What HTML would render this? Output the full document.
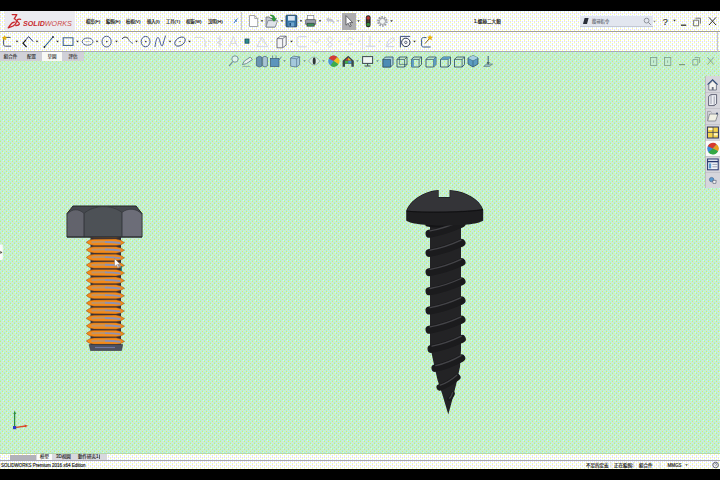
<!DOCTYPE html>
<html lang="zh-Hant">
<head>
<meta charset="utf-8">
<title>SOLIDWORKS</title>
<style>
html,body{margin:0;padding:0;background:#000;}
body{width:720px;height:480px;overflow:hidden;position:relative;font-family:"Liberation Sans","Noto Sans CJK TC",sans-serif;color:#222;}
.abs{position:absolute;}
#app{position:absolute;left:0;top:11px;width:720px;height:458px;overflow:hidden;}
#titlebar{position:absolute;left:0;top:0;width:720px;height:20px;}
#logo{position:absolute;left:4.5px;top:0;width:70px;height:20px;background:#ebebf0;}
#toolbar{position:absolute;left:0;top:21px;width:720px;height:20px;}
#tabs{position:absolute;left:0;top:40.5px;width:84px;height:9px;background:#d0d0d8;}
.tab{position:absolute;top:0;height:9px;font-size:4.5px;line-height:10px;text-align:center;color:#333;white-space:nowrap;}
.menu{position:absolute;top:6px;-webkit-text-stroke:0.18px;height:10px;font-size:4.3px;line-height:10.5px;color:#222;white-space:nowrap;}
.t{position:absolute;white-space:nowrap;color:#222;}
.s{-webkit-text-stroke:0.15px;}
.tab,.bt{-webkit-text-stroke:0.12px;}
.s{font-size:4.5px;line-height:8px;top:1.5px;}
#btabs{position:absolute;left:0;top:443px;width:720px;height:6px;}
#status{position:absolute;left:0;top:449px;width:720px;height:9px;}
#taskpane{position:absolute;left:705px;top:65px;width:15px;height:112px;background:#d6d6dc;}
svg{position:absolute;left:0;top:0;overflow:visible;}
</style>
</head>
<body>
<svg id="bg" width="720" height="480" viewBox="0 0 720 480" shape-rendering="crispEdges">
<defs>
<pattern id="dg" width="8" height="8" patternUnits="userSpaceOnUse">
<rect width="8" height="8" fill="#dbffaa"/>
<rect x="0" y="0" width="1" height="1" fill="#b6ffaa"/>
<rect x="1" y="0" width="1" height="1" fill="#b6dbff"/>
<rect x="3" y="0" width="1" height="1" fill="#b6ffff"/>
<rect x="4" y="0" width="1" height="1" fill="#b6ffaa"/>
<rect x="5" y="0" width="1" height="1" fill="#b6dbff"/>
<rect x="7" y="0" width="1" height="1" fill="#b6dbff"/>
<rect x="0" y="1" width="1" height="1" fill="#b6dbaa"/>
<rect x="2" y="1" width="1" height="1" fill="#b6dbff"/>
<rect x="4" y="1" width="1" height="1" fill="#b6dbaa"/>
<rect x="6" y="1" width="1" height="1" fill="#b6dbff"/>
<rect x="1" y="2" width="1" height="1" fill="#b6dbff"/>
<rect x="3" y="2" width="1" height="1" fill="#b6dbff"/>
<rect x="5" y="2" width="1" height="1" fill="#b6dbff"/>
<rect x="6" y="2" width="1" height="1" fill="#b6ffaa"/>
<rect x="7" y="2" width="1" height="1" fill="#b6dbff"/>
<rect x="0" y="3" width="1" height="1" fill="#b6dbff"/>
<rect x="2" y="3" width="1" height="1" fill="#b6dbaa"/>
<rect x="4" y="3" width="1" height="1" fill="#b6dbff"/>
<rect x="6" y="3" width="1" height="1" fill="#b6dbaa"/>
<rect x="0" y="4" width="1" height="1" fill="#b6ffaa"/>
<rect x="1" y="4" width="1" height="1" fill="#b6dbff"/>
<rect x="3" y="4" width="1" height="1" fill="#b6dbff"/>
<rect x="4" y="4" width="1" height="1" fill="#b6ffaa"/>
<rect x="5" y="4" width="1" height="1" fill="#b6dbff"/>
<rect x="7" y="4" width="1" height="1" fill="#b6ffff"/>
<rect x="0" y="5" width="1" height="1" fill="#b6dbaa"/>
<rect x="2" y="5" width="1" height="1" fill="#b6dbff"/>
<rect x="4" y="5" width="1" height="1" fill="#b6dbaa"/>
<rect x="6" y="5" width="1" height="1" fill="#b6dbff"/>
<rect x="1" y="6" width="1" height="1" fill="#b6dbff"/>
<rect x="2" y="6" width="1" height="1" fill="#b6ffaa"/>
<rect x="3" y="6" width="1" height="1" fill="#b6dbff"/>
<rect x="5" y="6" width="1" height="1" fill="#b6dbff"/>
<rect x="7" y="6" width="1" height="1" fill="#b6dbff"/>
<rect x="0" y="7" width="1" height="1" fill="#b6dbff"/>
<rect x="2" y="7" width="1" height="1" fill="#b6dbaa"/>
<rect x="4" y="7" width="1" height="1" fill="#b6dbff"/>
<rect x="6" y="7" width="1" height="1" fill="#b6dbaa"/>
</pattern>
<pattern id="dw" width="4" height="4" patternUnits="userSpaceOnUse"><rect width="4" height="4" fill="#ffffff"/>
<rect x="0" y="0" width="1" height="1" fill="#ffff99"/>
<rect x="0" y="1" width="1" height="1" fill="#dbdbff"/>
<rect x="2" y="1" width="1" height="1" fill="#dbdbff"/>
<rect x="2" y="2" width="1" height="1" fill="#ffff99"/>
<rect x="0" y="3" width="1" height="1" fill="#dbdbff"/>
<rect x="2" y="3" width="1" height="1" fill="#dbffff"/>
</pattern>
</defs>
<rect x="0" y="11" width="720" height="458" fill="#c5eeca"/>
<rect x="0" y="11" width="720" height="458" fill="url(#dg)"/>
<rect x="0" y="11" width="720" height="41" fill="#f6f8f3"/>
<rect x="0" y="11" width="720" height="41" fill="url(#dw)"/>
<rect x="0" y="453" width="720" height="1" fill="#b6d6ac"/>
<rect x="0" y="454" width="720" height="15" fill="#f6f8f3"/>
<rect x="0" y="454" width="720" height="15" fill="url(#dw)"/>
<rect x="0" y="460" width="720" height="1" fill="#a6a6aa"/>
<rect x="0" y="51" width="720" height="1" fill="#a8a8b8"/>
<rect x="0" y="31" width="720" height="1" fill="#9c9ca4"/>
</svg>
<div id="app">
  <div id="titlebar">
    <div id="logo"></div>
    <div class="t" id="sw" style="left:22.5px;top:8px;font-size:7.7px;line-height:9px;font-style:italic;color:#c8282c;transform-origin:0 0;transform:scaleX(0.93);"><b>SOLID</b><span style="color:#cc4848;">WORKS</span></div>
    <div class="menu" style="left:86px;">檔案(F)</div>
    <div class="menu" style="left:106px;">編輯(E)</div>
    <div class="menu" style="left:126px;">檢視(V)</div>
    <div class="menu" style="left:147px;">插入(I)</div>
    <div class="menu" style="left:166px;">工具(T)</div>
    <div class="menu" style="left:186px;">視窗(W)</div>
    <div class="menu" style="left:208px;">說明(H)</div>
    <div class="abs" style="left:241px;top:1px;width:1px;height:18px;background:#c8c8d0;"></div>
    <div class="menu" style="left:474px;font-size:4.6px;">1.螺絲二大類</div>
    <div class="abs" style="left:580px;top:4.500px;width:73px;height:10.500px;background:#e2e6ef;border-bottom:0.5px solid #c4c8d4;"></div>
    <div class="menu" style="left:592px;color:#707480;">搜尋指令</div>
    <div class="t" style="left:662.500px;top:4.500px;font-size:9.5px;line-height:12px;color:#333;-webkit-text-stroke:0.18px;">?</div>
  </div>
    <div id="toolbar"></div>
  <div class="abs" style="left:716.500px;top:21px;width:1px;height:20px;background:#c4c4cc;"></div>
  <div id="tabs">
    <div class="tab" style="left:0;width:21px;">組合件</div>
    <div class="tab" style="left:21px;width:21px;">配置</div>
    <div class="tab" style="left:42px;width:20px;background:#f8f9f6;">草圖</div>
    <div class="tab" style="left:62px;width:22px;">評估</div>
  </div>
  <div id="taskpane"></div>
  <div id="btabs">
    <div class="abs" style="left:10px;top:1px;width:26px;height:4.5px;background:#b2b2ba;"></div>
    <div class="abs" style="left:36px;top:0;width:70.500px;height:6px;background:#d8d8de;"></div>
    <div class="abs" style="left:37px;top:0;width:14.500px;height:6px;background:#fafafa;"></div>
    <div class="t bt" style="left:40px;top:-1px;font-size:4.500px;line-height:7.500px;">模型</div>
    <div class="t bt" style="left:56px;top:-1px;font-size:4.500px;line-height:7.500px;">3D視圖</div>
    <div class="t bt" style="left:78px;top:-1px;font-size:4.500px;line-height:7.500px;">動作研究1</div>
  </div>
  <div id="status">
    <div class="t s" style="left:1px;">SOLIDWORKS Premium 2016 x64 Edition</div>
    <div class="t s" style="left:586px;">不足的定義</div>
    <div class="t s" style="left:614px;">正在編輯:</div>
    <div class="t s" style="left:639px;">組合件</div>
    <div class="t s" style="left:667.500px;">MMGS</div>
  </div>
  <svg id="gfx" width="720" height="458" viewBox="0 11 720 458">
<rect x="90.500" y="236" width="30.500" height="110" fill="#342e38"/>
<path d="M86.200 234.65Q88.500 231.95,94 231.55L116 231.45Q121.500 232.15,124.600 235.05Q121.500 237.75,116 237.95L94 237.85Q88.500 237.35,86.200 234.65z" fill="#f48a18" stroke="#6a4428" stroke-width="0.4"/>
<path d="M91.500 234.55C98 234.15,102 234.15,107 234.35" stroke="#c09468" stroke-width="2" fill="none"/>
<path d="M105 234.35C112 234.35,116 234.75,120.500 235.35" stroke="#8c92b4" stroke-width="1.9" fill="none"/>
<path d="M86.200 242.25Q88.500 239.55,94 239.15L116 239.05Q121.500 239.75,124.600 242.65Q121.500 245.35,116 245.55L94 245.45Q88.500 244.95,86.200 242.25z" fill="#f48a18" stroke="#6a4428" stroke-width="0.4"/>
<path d="M91.500 242.15C98 241.75,102 241.75,107 241.95" stroke="#c09468" stroke-width="2" fill="none"/>
<path d="M105 241.95C112 241.95,116 242.35,120.500 242.95" stroke="#8c92b4" stroke-width="1.9" fill="none"/>
<path d="M86.200 249.85Q88.500 247.15,94 246.75L116 246.65Q121.500 247.35,124.600 250.25Q121.500 252.95,116 253.15L94 253.05Q88.500 252.55,86.200 249.85z" fill="#f48a18" stroke="#6a4428" stroke-width="0.4"/>
<path d="M91.500 249.75C98 249.35,102 249.35,107 249.55" stroke="#c09468" stroke-width="2" fill="none"/>
<path d="M105 249.55C112 249.55,116 249.95,120.500 250.55" stroke="#8c92b4" stroke-width="1.9" fill="none"/>
<path d="M86.200 257.45Q88.500 254.75,94 254.35L116 254.25Q121.500 254.95,124.600 257.85Q121.500 260.55,116 260.75L94 260.65Q88.500 260.15,86.200 257.45z" fill="#f48a18" stroke="#6a4428" stroke-width="0.4"/>
<path d="M91.500 257.35C98 256.95,102 256.95,107 257.15" stroke="#c09468" stroke-width="2" fill="none"/>
<path d="M105 257.15C112 257.15,116 257.55,120.500 258.15" stroke="#8c92b4" stroke-width="1.9" fill="none"/>
<path d="M86.200 265.05Q88.500 262.35,94 261.95L116 261.85Q121.500 262.55,124.600 265.45Q121.500 268.15,116 268.35L94 268.25Q88.500 267.75,86.200 265.05z" fill="#f48a18" stroke="#6a4428" stroke-width="0.4"/>
<path d="M91.500 264.95C98 264.55,102 264.55,107 264.75" stroke="#c09468" stroke-width="2" fill="none"/>
<path d="M105 264.75C112 264.75,116 265.15,120.500 265.75" stroke="#8c92b4" stroke-width="1.9" fill="none"/>
<path d="M86.200 272.65Q88.500 269.95,94 269.55L116 269.45Q121.500 270.15,124.600 273.05Q121.500 275.75,116 275.95L94 275.85Q88.500 275.35,86.200 272.65z" fill="#f48a18" stroke="#6a4428" stroke-width="0.4"/>
<path d="M91.500 272.55C98 272.15,102 272.15,107 272.35" stroke="#c09468" stroke-width="2" fill="none"/>
<path d="M105 272.35C112 272.35,116 272.75,120.500 273.35" stroke="#8c92b4" stroke-width="1.9" fill="none"/>
<path d="M86.200 280.25Q88.500 277.55,94 277.15L116 277.05Q121.500 277.75,124.600 280.65Q121.500 283.35,116 283.55L94 283.45Q88.500 282.95,86.200 280.25z" fill="#f48a18" stroke="#6a4428" stroke-width="0.4"/>
<path d="M91.500 280.15C98 279.75,102 279.75,107 279.95" stroke="#c09468" stroke-width="2" fill="none"/>
<path d="M105 279.95C112 279.95,116 280.35,120.500 280.95" stroke="#8c92b4" stroke-width="1.9" fill="none"/>
<path d="M86.200 287.85Q88.500 285.15,94 284.75L116 284.65Q121.500 285.35,124.600 288.25Q121.500 290.95,116 291.15L94 291.05Q88.500 290.55,86.200 287.85z" fill="#f48a18" stroke="#6a4428" stroke-width="0.4"/>
<path d="M91.500 287.75C98 287.35,102 287.35,107 287.55" stroke="#c09468" stroke-width="2" fill="none"/>
<path d="M105 287.55C112 287.55,116 287.95,120.500 288.55" stroke="#8c92b4" stroke-width="1.9" fill="none"/>
<path d="M86.200 295.45Q88.500 292.75,94 292.35L116 292.25Q121.500 292.95,124.600 295.85Q121.500 298.55,116 298.75L94 298.65Q88.500 298.15,86.200 295.45z" fill="#f48a18" stroke="#6a4428" stroke-width="0.4"/>
<path d="M91.500 295.35C98 294.95,102 294.95,107 295.15" stroke="#c09468" stroke-width="2" fill="none"/>
<path d="M105 295.15C112 295.15,116 295.55,120.500 296.15" stroke="#8c92b4" stroke-width="1.9" fill="none"/>
<path d="M86.200 303.05Q88.500 300.35,94 299.95L116 299.85Q121.500 300.55,124.600 303.45Q121.500 306.15,116 306.35L94 306.25Q88.500 305.75,86.200 303.05z" fill="#f48a18" stroke="#6a4428" stroke-width="0.4"/>
<path d="M91.500 302.95C98 302.55,102 302.55,107 302.75" stroke="#c09468" stroke-width="2" fill="none"/>
<path d="M105 302.75C112 302.75,116 303.15,120.500 303.75" stroke="#8c92b4" stroke-width="1.9" fill="none"/>
<path d="M86.200 310.65Q88.500 307.95,94 307.55L116 307.45Q121.500 308.15,124.600 311.05Q121.500 313.75,116 313.95L94 313.85Q88.500 313.35,86.200 310.65z" fill="#f48a18" stroke="#6a4428" stroke-width="0.4"/>
<path d="M91.500 310.55C98 310.15,102 310.15,107 310.35" stroke="#c09468" stroke-width="2" fill="none"/>
<path d="M105 310.35C112 310.35,116 310.75,120.500 311.35" stroke="#8c92b4" stroke-width="1.9" fill="none"/>
<path d="M86.200 318.25Q88.500 315.55,94 315.15L116 315.05Q121.500 315.75,124.600 318.65Q121.500 321.35,116 321.55L94 321.45Q88.500 320.95,86.200 318.25z" fill="#f48a18" stroke="#6a4428" stroke-width="0.4"/>
<path d="M91.500 318.15C98 317.75,102 317.75,107 317.95" stroke="#c09468" stroke-width="2" fill="none"/>
<path d="M105 317.95C112 317.95,116 318.35,120.500 318.95" stroke="#8c92b4" stroke-width="1.9" fill="none"/>
<path d="M86.200 325.85Q88.500 323.15,94 322.75L116 322.65Q121.500 323.35,124.600 326.25Q121.500 328.95,116 329.15L94 329.05Q88.500 328.55,86.200 325.85z" fill="#f48a18" stroke="#6a4428" stroke-width="0.4"/>
<path d="M91.500 325.75C98 325.35,102 325.35,107 325.55" stroke="#c09468" stroke-width="2" fill="none"/>
<path d="M105 325.55C112 325.55,116 325.95,120.500 326.55" stroke="#8c92b4" stroke-width="1.9" fill="none"/>
<path d="M86.200 333.45Q88.500 330.75,94 330.35L116 330.25Q121.500 330.95,124.600 333.85Q121.500 336.55,116 336.75L94 336.65Q88.500 336.15,86.200 333.45z" fill="#f48a18" stroke="#6a4428" stroke-width="0.4"/>
<path d="M91.500 333.35C98 332.95,102 332.95,107 333.15" stroke="#c09468" stroke-width="2" fill="none"/>
<path d="M105 333.15C112 333.15,116 333.55,120.500 334.15" stroke="#8c92b4" stroke-width="1.9" fill="none"/>
<path d="M86.200 341.05Q88.500 338.35,94 337.95L116 337.85Q121.500 338.55,124.600 341.45Q121.500 344.15,116 344.35L94 344.25Q88.500 343.75,86.200 341.05z" fill="#f48a18" stroke="#6a4428" stroke-width="0.4"/>
<path d="M91.500 340.95C98 340.55,102 340.55,107 340.75" stroke="#c09468" stroke-width="2" fill="none"/>
<path d="M105 340.75C112 340.75,116 341.15,120.500 341.75" stroke="#8c92b4" stroke-width="1.9" fill="none"/>
<path d="M89.200 344.500h33.500l-1.200 6h-31z" fill="#4c5060" stroke="#34363e" stroke-width="0.6"/><path d="M95 347.500h20" stroke="#7078a0" stroke-width="1.2"/>
<path d="M67 213.500l6-7.500h63l6 7.500v23.500h-75z" fill="#45484e" stroke="#25272b" stroke-width="1" stroke-linejoin="round"/>
<path d="M67.400 214C72 208.500,79 208.500,84 213.500V236.600H67.400z" fill="#62636c"/>
<path d="M84 213.500C94 204.500,112 204.500,122 212.500V236.600H84z" fill="#4d5156"/>
<path d="M122 212.500C128 207.500,137 208.500,141.600 214V236.600H122z" fill="#6c6d78"/>
<path d="M84 213.500V237M122 212.500V237" stroke="#2a2c30" stroke-width="0.8" fill="none"/>
<path d="M67.400 214C72 208.500,79 208.500,84 213.500C94 204.500,112 204.500,122 212.500C128 207.500,137 208.500,141.600 214" stroke="#2e3034" stroke-width="0.6" fill="none"/>
<rect x="-1" y="244.500" width="3.800" height="15.500" rx="1.200" fill="#fafafa"/><path d="M0.300 250.800l2 1.600l-2 1.600z" fill="#4a4a3a"/>
<path d="M67 237h75" stroke="#2a2c30" stroke-width="1"/>
<path d="M114.500 258.500v8.200l2-1.800l1.400 3l1.200-0.600l-1.400-2.900h2.600z" fill="#fafafa" stroke="#8a6a4a" stroke-width="0.5"/>
<path d="M121.300 266v5" stroke="#1c7c7c" stroke-width="1.200"/>
<path d="M430 224H461V350L460 367L456 385L453 397L448.300 414.500L442.500 395L437.500 380L433 360L430 345z" fill="#232325"/>
<path d="M425.500 221.500h38.500v4.500c-6 2.500-32 2.500-38.500 0z" fill="#141416"/>
<path d="M429.5 233.7Q445.5 230.9,461.5 223.7" stroke="#1b1b1d" stroke-width="8" stroke-linecap="round" fill="none"/>
<path d="M430.0 230.9Q445.5 228.1,461.0 220.9" stroke="#444448" stroke-width="1.3" stroke-linecap="round" fill="none"/>
<path d="M429.5 252.9Q445.5 250.1,461.5 242.9" stroke="#1b1b1d" stroke-width="8" stroke-linecap="round" fill="none"/>
<path d="M430.0 250.1Q445.5 247.3,461.0 240.1" stroke="#444448" stroke-width="1.3" stroke-linecap="round" fill="none"/>
<path d="M429.5 272.1Q445.5 269.3,461.5 262.1" stroke="#1b1b1d" stroke-width="8" stroke-linecap="round" fill="none"/>
<path d="M430.0 269.3Q445.5 266.5,461.0 259.3" stroke="#444448" stroke-width="1.3" stroke-linecap="round" fill="none"/>
<path d="M429.5 291.3Q445.5 288.5,461.5 281.3" stroke="#1b1b1d" stroke-width="8" stroke-linecap="round" fill="none"/>
<path d="M430.0 288.5Q445.5 285.7,461.0 278.5" stroke="#444448" stroke-width="1.3" stroke-linecap="round" fill="none"/>
<path d="M429.5 310.5Q445.5 307.7,461.5 300.5" stroke="#1b1b1d" stroke-width="8" stroke-linecap="round" fill="none"/>
<path d="M430.0 307.7Q445.5 304.9,461.0 297.7" stroke="#444448" stroke-width="1.3" stroke-linecap="round" fill="none"/>
<path d="M429.5 329.7Q445.5 326.9,461.5 319.7" stroke="#1b1b1d" stroke-width="8" stroke-linecap="round" fill="none"/>
<path d="M430.0 326.9Q445.5 324.1,461.0 316.9" stroke="#444448" stroke-width="1.3" stroke-linecap="round" fill="none"/>
<path d="M431.5 348.9Q446.6 346.1,461.8 338.9" stroke="#1b1b1d" stroke-width="8" stroke-linecap="round" fill="none"/>
<path d="M432.0 346.1Q446.6 343.3,461.3 336.1" stroke="#444448" stroke-width="1.3" stroke-linecap="round" fill="none"/>
<path d="M435.2 368.1Q448.4 365.3,461.5 358.1" stroke="#1b1b1d" stroke-width="7.5" stroke-linecap="round" fill="none"/>
<path d="M435.7 365.6Q448.4 362.8,461.0 355.6" stroke="#444448" stroke-width="1.3" stroke-linecap="round" fill="none"/>
<path d="M439.7 387.3Q448.5 384.5,457.3 377.3" stroke="#1b1b1d" stroke-width="6.5" stroke-linecap="round" fill="none"/>
<path d="M440.2 385.2Q448.5 382.4,456.8 375.2" stroke="#444448" stroke-width="1.3" stroke-linecap="round" fill="none"/>
<path d="M449.0 399.0Q451.0 398.4,453.0 393.5" stroke="#1b1b1d" stroke-width="4" stroke-linecap="round" fill="none"/>
<path d="M449.5 398.2Q451.0 397.6,452.5 392.7" stroke="#444448" stroke-width="1.3" stroke-linecap="round" fill="none"/>
<path d="M406.200 220.500V211C410 200,424 191.500,436 190.200L438.700 190V197H449.500V190L452 190.200C466 191.500,479.500 199,483.200 209.500V220.500C478 224.500,460 225.500,445 225.500C430 225.500,411 224.500,406.200 220.500z" fill="#1e1e20"/>
<path d="M407 210.500C411 200,424 192.300,436 191L438 190.800V197.800H450.200V190.800L452 191C466 192.300,478.500 199.500,482.400 209C470 211.500,420 212.500,407 210.500z" fill="#343438"/>
<path d="M406.500 211C420 213.200,470 212.400,483 209.600" stroke="#101012" stroke-width="1" fill="none"/>
<g fill="none" stroke="#c8282c" stroke-width="1.3" stroke-linecap="round" stroke-linejoin="round"><path d="M12.2 14.6h4.6l-2.6 4.2c2.6 0 2.8 3.4 1 5.6c-1.6 2-4.6 2.6-7 3.4c2.2-3 3-5.4 6.2-5.6"/><path d="M20.6 19.3c-3.4-0.6-4.6 1.4-2.6 2.7c2 1.2 2.2 3.6-2.2 3.5"/></g>
<path d="M237.5 18.5l-3.6 4.6M234.6 19.6l2.4 2" stroke="#3a78c8" stroke-width="1" fill="none"/>
<path d="M249.5 15.5h5.2l3 3v8h-8.2z" fill="#fdfdfd" stroke="#8a8c94" stroke-width="0.8"/><path d="M254.7 15.5v3h3" fill="none" stroke="#8a8c94" stroke-width="0.7"/>
<path d="M260.7 20.3h2.6l-1.3 1.6z" fill="#333"/>
<path d="M266 17h3.4l1 1.4h4.6v8.6h-9z" fill="#c4c8d0" stroke="#5a5e68" stroke-width="0.7"/><path d="M266 27l2-6.4h9.6l-2.4 6.4z" fill="#dfe3ea" stroke="#707884" stroke-width="0.7"/><path d="M270 15.2c3-0.8 5 0.6 5 3.2h1.6l-2.6 3l-2.6-3h1.6c0-1.4-1-2.4-3-3.2z" fill="#2e9e3a" stroke="#1c6e26" stroke-width="0.4"/>
<path d="M280.7 20.3h2.6l-1.3 1.6z" fill="#333"/>
<rect x="286" y="15.2" width="10.8" height="11.6" rx="0.8" fill="#3674a4" stroke="#1c3c5c" stroke-width="0.9"/><rect x="288" y="16" width="6.8" height="4.6" fill="#d8e6f2"/><rect x="288.6" y="22.4" width="5.6" height="4" fill="#6ea4cc"/><rect x="289.4" y="23" width="1.6" height="2.8" fill="#1e4e7c"/>
<path d="M299.7 20.3h2.6l-1.3 1.6z" fill="#333"/>
<rect x="307.4" y="15.6" width="6.4" height="4.6" fill="#fdfdfd" stroke="#7c8088" stroke-width="0.7"/><rect x="305.6" y="19.6" width="10" height="5" rx="0.6" fill="#9aa0aa" stroke="#50545c" stroke-width="0.7"/><rect x="307" y="23.2" width="7.2" height="3" fill="#3c8c58" stroke="#30343c" stroke-width="0.6"/>
<path d="M318.7 20.3h2.6l-1.3 1.6z" fill="#333"/>
<path d="M326 19.5l3-2.6v1.8c3.6 0 5.6 2 5.2 5.8c-0.8-2.4-2.4-3.2-5.2-3.2v1.8z" fill="#c4c6d0"/>
<path d="M336.7 20.3h2.6l-1.3 1.6z" fill="#b0b2bc"/>
<rect x="342" y="13" width="14" height="17" fill="#aeaeb0"/>
<path d="M346 15.600v9.600l2.200-2l1.600 3.400l1.400-0.700l-1.600-3.300h3z" fill="#fafafa" stroke="#3a3a40" stroke-width="0.7" stroke-linejoin="round"/>
<path d="M357.2 20.3h2.6l-1.3 1.6z" fill="#333"/>
<rect x="365.800" y="15.200" width="4.800" height="12" rx="2.200" fill="#2e2a2a"/><circle cx="368.200" cy="18" r="1.700" fill="#b83430"/><circle cx="368.200" cy="24.400" r="1.700" fill="#348c3c"/><circle cx="368.200" cy="21.200" r="1.100" fill="#4a4030"/>
<circle cx="382.4" cy="21.4" r="4.2" fill="none" stroke="#9a9ca4" stroke-width="2.2" stroke-dasharray="1.6 1"/><circle cx="382.4" cy="21.4" r="3" fill="#f3f5f3" stroke="#8a8c94" stroke-width="0.8"/>
<path d="M390.2 20.3h2.6l-1.3 1.6z" fill="#333"/>
<path d="M583 24l1.6-6h4l-1.6 6z" fill="#2a2e3a"/>
<circle cx="646.6" cy="20.6" r="2.4" fill="none" stroke="#7c8088" stroke-width="0.8"/><path d="M648.4 22.4l2.4 2.4" stroke="#7c8088" stroke-width="0.9"/>
<path d="M653.2 20.8h2.6l-1.3 1.6z" fill="#888"/>
<path d="M673.2 19.8h2.6l-1.3 1.6z" fill="#333"/>
<path d="M681 25.2h5.2" stroke="#333" stroke-width="1.3"/>
<path d="M695.4 18.2h5v5.4M693.6 20.2h5v5.6h-5z" fill="none" stroke="#555" stroke-width="0.8"/>
<path d="M709 17.4l7 7.6M716 17.4l-7 7.6" stroke="#333" stroke-width="1"/>
<path d="M10.6 37.4h-5.4c-1.2 0-1.6 0.6-1.6 1.8v5c0 1.4 0.6 2 2 2h5.6" fill="none" stroke="#4a5270" stroke-width="1"/><path d="M4.6 35.6l0.7 1.5l1.6 0.2l-1.2 1.1l0.3 1.6l-1.4-0.8l-1.4 0.8l0.3-1.6l-1.2-1.1l1.6-0.2z" fill="#f0b400" stroke="#c08800" stroke-width="0.3"/>
<path d="M15.7 40.8h2.6l-1.3 1.6z" fill="#333"/>
<path d="M24 42l4.6-5.4l4.6 5" fill="none" stroke="#2c3c6c" stroke-width="1"/><path d="M26 40.2l-3 3l3.6 4" fill="none" stroke="#1a1a1e" stroke-width="1.2"/>
<path d="M35.7 40.8h2.6l-1.3 1.6z" fill="#333"/>
<path d="M44.4 47l8.6-10" stroke="#2c5c8c" stroke-width="1.1"/><circle cx="44.4" cy="47" r="0.9" fill="#223"/><circle cx="53" cy="37" r="0.9" fill="#223"/>
<path d="M56.2 40.8h2.6l-1.3 1.6z" fill="#333"/>
<rect x="63.2" y="37.8" width="9.8" height="7.6" fill="none" stroke="#3a5c8c" stroke-width="1"/>
<path d="M76.2 40.8h2.6l-1.3 1.6z" fill="#333"/>
<ellipse cx="87.6" cy="41.6" rx="5.4" ry="3.6" fill="none" stroke="#4a5a7c" stroke-width="0.9"/><path d="M85.4 41.6h4.4" stroke="#8a8ea0" stroke-width="0.6"/>
<path d="M95.7 40.8h2.6l-1.3 1.6z" fill="#333"/>
<ellipse cx="106.6" cy="41.6" rx="4.6" ry="5.4" fill="none" stroke="#3a4c7c" stroke-width="0.9"/><circle cx="106.8" cy="41.6" r="0.8" fill="#334"/>
<path d="M115.2 40.8h2.6l-1.3 1.6z" fill="#333"/>
<path d="M122 39c2-2.6 5.4-2.4 6.6 0.4" fill="none" stroke="#2a2c3a" stroke-width="1"/><path d="M128.6 39.4c1 2 2.6 3.4 4.4 4" fill="none" stroke="#4a5a8c" stroke-width="0.9"/>
<path d="M135.2 40.8h2.6l-1.3 1.6z" fill="#333"/>
<ellipse cx="145.6" cy="41.6" rx="4.4" ry="5.2" fill="none" stroke="#3a4c7c" stroke-width="0.9"/><circle cx="145.8" cy="41.6" r="0.8" fill="#334"/>
<path d="M155 47c1-9 3-12 4.4-7.4c1.2 4.4 2.4 8.4 3.4 5.4c1-3 1.6-6.600 2.800-9.400" fill="none" stroke="#3a4c8c" stroke-width="0.9"/>
<path d="M168.7 40.8h2.6l-1.3 1.6z" fill="#333"/>
<ellipse cx="180" cy="41.6" rx="5.8" ry="3.8" transform="rotate(-35 180 41.6)" fill="none" stroke="#3a4c7c" stroke-width="0.9"/><circle cx="180" cy="41.6" r="0.7" fill="#334"/>
<path d="M188.2 40.8h2.6l-1.3 1.6z" fill="#333"/>
<path d="M194.6 37.4h6c3 0 4.6 1.6 4.6 4.6v5" fill="none" stroke="#cfd1da" stroke-width="0.9"/>
<path d="M207.7 40.8h2.6l-1.3 1.6z" fill="#cfd1da"/>
<path d="M219.8 35.6v12M217 38l5 2l-5 2.600l5 2" fill="none" stroke="#cfd1da" stroke-width="0.8"/>
<path d="M229.4 46.600l4-10l4 10M231 43.400h5" fill="none" stroke="#cfd1da" stroke-width="0.8"/>
<rect x="245" y="39" width="4" height="4.2" fill="#2c8c8c" stroke="#1c4c5c" stroke-width="0.8"/>
<path d="M257 46.600l5-9.600l5.600 9.600zM259 37.400l7 7" fill="none" stroke="#cfd1da" stroke-width="0.8"/>
<path d="M270.7 40.8h2.6l-1.3 1.6z" fill="#cfd1da"/>
<path d="M277 38.600l3.600-2.400h5.600v8.800l-3.600 2.800h-5.600z" fill="#f4f4f6" stroke="#5a5c68" stroke-width="0.8"/><path d="M277 38.600h5.600l3.600-2.400M282.600 38.600v9.200" fill="none" stroke="#5a5c68" stroke-width="0.7"/>
<path d="M290.2 40.8h2.6l-1.3 1.6z" fill="#333"/>
<path d="M306.600 36.600h-7c-1.800 0-2.600 1-2.600 2.600v5c0 1.800 1 2.600 2.600 2.600h7" fill="none" stroke="#cfd1da" stroke-width="0.9"/>
<path d="M311.400 41h3l2 2.600l3.600-4.600" fill="none" stroke="#cfd1da" stroke-width="0.8"/>
<path d="M330 36.600l3 3l-3 3l-3-3zM330 42.400l2.600 2.400l-2.600 2.600l-2.600-2.600z" fill="none" stroke="#cfd1da" stroke-width="0.8"/>
<path d="M337.7 40.8h2.6l-1.3 1.6z" fill="#cfd1da"/>
<path d="M346 41.600l4-4.600l4 3M348 44h5" fill="none" stroke="#cfd1da" stroke-width="0.8"/>
<path d="M357.7 40.8h2.6l-1.3 1.6z" fill="#cfd1da"/>
<path d="M362.500 33.500v16" stroke="#d0d2da" stroke-width="0.8"/>
<path d="M370 35.600v10.600M365.600 46.200h9.800" fill="none" stroke="#cfd1da" stroke-width="1"/>
<path d="M378.2 40.8h2.6l-1.3 1.6z" fill="#cfd1da"/>
<path d="M386 46.600l2-5.600l5-3.600l1.600 2.600l-5 3.600zM386 46.600h8" fill="none" stroke="#cfd1da" stroke-width="0.9"/>
<path d="M400.400 47.400v-11h9.800" fill="none" stroke="#2c3c6c" stroke-width="0.9"/><circle cx="405.800" cy="42.400" r="4.200" fill="#fafafa" stroke="#26304c" stroke-width="1"/><circle cx="405.800" cy="42.400" r="1.200" fill="none" stroke="#26304c" stroke-width="0.7"/>
<path d="M413.2 40.8h2.6l-1.3 1.6z" fill="#333"/>
<path d="M430.600 47h-7c-1.400 0-2-0.600-2-2v-5.600c0-1.200 0.600-1.800 1.800-1.800h3" fill="none" stroke="#3a5a8c" stroke-width="1"/><path d="M425 43.600l4.600-5.400" stroke="#7c6030" stroke-width="1"/><path d="M430 35.200l0.800 1.600l1.700 0.200l-1.300 1.200l0.400 1.700l-1.600-0.900l-1.500 0.900l0.300-1.700l-1.200-1.200l1.700-0.200z" fill="#f0b400" stroke="#c08800" stroke-width="0.3"/>
<circle cx="235" cy="59" r="3.200" fill="#dff2ea" stroke="#6a8a90" stroke-width="0.9"/><path d="M232.600 61.600l-3.400 4.400" stroke="#7c9a94" stroke-width="1.300"/>
<path d="M242.400 64.600l2-3.600l6-4l2 2.600l-6 4z" fill="#e8f0ee" stroke="#5a7a84" stroke-width="0.800"/><path d="M242.400 66.400h8" stroke="#7a9a9a" stroke-width="0.700"/>
<path d="M256.400 57.800l3-1.600l2.400 1v9l-2.400 0.800l-3-1.200z" fill="#6a94b0" stroke="#3c5c74" stroke-width="0.700"/><path d="M262.600 57.200l2.400-1l2.400 1.200v8.400l-2.400 1.200l-2.400-1z" fill="#a8c4d4" stroke="#3c5c74" stroke-width="0.700"/>
<rect x="270.400" y="58.400" width="8.600" height="8.200" fill="#5c94bc" stroke="#3c5c74" stroke-width="0.700"/><path d="M272.600 58.400v-3M276 58.400v-3M279 60l2.600-3.400" stroke="#4c6c7c" stroke-width="0.700"/>
<path d="M283.2 60.3h2.6l-1.3 1.6z" fill="#6c8c8c"/>
<path d="M290.600 58l3-1.800l6 0.600v8l-3 2.200l-6-0.800z" fill="#a4c8dc" stroke="#4c6c84" stroke-width="0.700"/><path d="M290.600 58l6 0.800l3-2M296.600 58.800v8.200" fill="none" stroke="#4c6c84" stroke-width="0.600"/>
<path d="M303.2 60.3h2.6l-1.3 1.6z" fill="#6c8c8c"/>
<path d="M308.600 61c2-3 4.200-4 5.600-4s3.600 1 5.600 4c-2 3-4.200 4-5.600 4s-3.600-1-5.600-4z" fill="#d8ece4" stroke="#7c9c94" stroke-width="0.600"/><ellipse cx="314.200" cy="61" rx="1.500" ry="3.600" fill="#2c3434"/>
<path d="M322.2 60.3h2.6l-1.3 1.6z" fill="#6c8c8c"/>
<circle cx="333.600" cy="61" r="5.400" fill="#4c94d4"/><path d="M333.600 61l-4.800-2.600a5.400 5.400 0 0 1 8.600-1.400z" fill="#d43c34"/><path d="M333.600 61l3.800-4a5.400 5.400 0 0 1 1 7.200z" fill="#f0c020"/><path d="M333.600 61l4.800 3.200a5.400 5.400 0 0 1-8 1.600z" fill="#3cac4c"/>
<path d="M342.600 66.800v-6l5.600-5l5.600 5v6h-2.400v-3h-6.400v3z" fill="#3a4a4a"/><path d="M345 60.600l3.200-3v3z" fill="#d43c34"/><path d="M348.200 57.600l3.200 3h-3.200z" fill="#f0c020"/><rect x="345" y="60.800" width="3.200" height="2.600" fill="#3cac4c"/><rect x="348.200" y="60.800" width="3.200" height="2.600" fill="#4c94d4"/>
<path d="M356.2 60.3h2.6l-1.3 1.6z" fill="#6c8c8c"/>
<rect x="362.600" y="56.600" width="10" height="6.800" fill="#eef6f2" stroke="#3c4850" stroke-width="1"/><path d="M367.600 63.400v2.400M364.600 66h6" stroke="#3c4850" stroke-width="1"/>
<path d="M376.2 60.3h2.6l-1.3 1.6z" fill="#6c8c8c"/>
<path d="M383 59.400l2.400-2.400h7.600v7.400l-2.400 2.600h-7.600z" fill="#a8d0dc" stroke="#284860" stroke-width="0.800"/><rect x="383" y="59.400" width="7.600" height="7.600" fill="#4c8cb4" stroke="#284860" stroke-width="0.600"/>
<path d="M397 59.400l2.400-2.400h7.600v7.400l-2.400 2.600h-7.600z" fill="none" stroke="#284860" stroke-width="0.800"/><path d="M397 59.400h7.600l2.400-2.400M404.6 59.400v7.600" fill="none" stroke="#284860" stroke-width="0.700"/>
<path d="M399.400 57l0 7.400h7.600" fill="none" stroke="#284860" stroke-width="0.600"/>
<path d="M411.5 59.400l2.400-2.400h7.600v7.400l-2.400 2.600h-7.600z" fill="none" stroke="#284860" stroke-width="0.800"/><path d="M411.5 59.400h7.600l2.400-2.400M419.1 59.400v7.600" fill="none" stroke="#284860" stroke-width="0.700"/>
<path d="M411.500 59.400v7.600h2.400v-7.600z" fill="#5c9cc0"/>
<path d="M426 59.400l2.400-2.400h7.600v7.400l-2.400 2.600h-7.600z" fill="none" stroke="#284860" stroke-width="0.800"/><path d="M426 59.400h7.600l2.400-2.400M433.6 59.400v7.600" fill="none" stroke="#284860" stroke-width="0.700"/>
<path d="M433.600 59.400l2.400-2.400v7.400l-2.400 2.600z" fill="#5c9cc0"/>
<path d="M440.5 59.400l2.400-2.400h7.600v7.400l-2.400 2.600h-7.600z" fill="none" stroke="#284860" stroke-width="0.800"/><path d="M440.5 59.400h7.600l2.400-2.400M448.1 59.400v7.600" fill="none" stroke="#284860" stroke-width="0.700"/>
<path d="M440.500 59.400l2.400-2.400h7.600l-2.400 2.400z" fill="#5c9cc0"/>
<path d="M454.5 59.400l2.400-2.400h7.600v7.400l-2.400 2.600h-7.600z" fill="none" stroke="#284860" stroke-width="0.800"/><path d="M454.5 59.400h7.600l2.400-2.400M462.1 59.400v7.600" fill="none" stroke="#284860" stroke-width="0.700"/>
<path d="M473 55.600l5 2.400v6l-5 3l-5-3v-6z" fill="#5c9cc0" stroke="#284860" stroke-width="0.700"/><path d="M468 58l5 2.600l5-2.600M473 60.600v6.400" fill="none" stroke="#2c5468" stroke-width="0.600"/><path d="M468 58l5-2.400l5 2.400l-5 2.600z" fill="#a8d0e0"/>
<path d="M488.200 56v8.400" stroke="#4c6c74" stroke-width="1.100"/><path d="M483.600 66.400l3-2.400h6l-3 2.400z" fill="#9cc0c8" stroke="#4c6c74" stroke-width="0.600"/><path d="M486.600 62l1.600 3l1.600-3z" fill="#4c6c74"/>
<rect x="650.400" y="57.400" width="6.400" height="8" fill="#c4ecd0" stroke="#7a9c86" stroke-width="0.800"/><path d="M653.600 60.400v2.400" stroke="#7a9c86" stroke-width="0.700"/>
<rect x="664.400" y="57.400" width="6.400" height="8" fill="#c4ecd0" stroke="#7a9c86" stroke-width="0.800"/><path d="M667.600 60.400v2.400" stroke="#7a9c86" stroke-width="0.700"/>
<path d="M679 64.600h6" stroke="#7a9c86" stroke-width="1.200"/>
<path d="M694.600 57.600h5v5.400M692.800 59.600h5v5.400h-5z" fill="none" stroke="#7a9c86" stroke-width="0.800"/>
<path d="M707.400 57.400l6.400 7.200M713.800 57.400l-6.400 7.200" stroke="#7a9c86" stroke-width="0.900"/>
<rect x="705" y="140" width="15" height="16" fill="#fafafa"/>
<path d="M705 92.5h15" stroke="#b8b8c0" stroke-width="0.600"/>
<path d="M705 108.5h15" stroke="#b8b8c0" stroke-width="0.600"/>
<path d="M705 124.5h15" stroke="#b8b8c0" stroke-width="0.600"/>
<path d="M705 140.5h15" stroke="#b8b8c0" stroke-width="0.600"/>
<path d="M705 156.5h15" stroke="#b8b8c0" stroke-width="0.600"/>
<path d="M705 172.5h15" stroke="#b8b8c0" stroke-width="0.600"/>
<path d="M705.500 76v112" stroke="#b0b0b8" stroke-width="0.700"/>
<path d="M707.600 84.600l5-4.800l5 4.800" fill="none" stroke="#2c4c7c" stroke-width="1.200"/><path d="M708.800 84.400v5.600h7.600v-5.600l-3.800-3.600z" fill="#f4f4f0" stroke="#4c5468" stroke-width="0.700"/><rect x="711.800" y="87" width="1.800" height="3" fill="#6c7484"/>
<path d="M708.600 96.400l2.400-1.800h5.600v9l-2.400 2h-5.600z" fill="#eceef2" stroke="#44485c" stroke-width="0.800"/><path d="M711 94.800v9.200M714.200 96.400v9" fill="none" stroke="#6c7084" stroke-width="0.600"/>
<path d="M707.600 121l2-7h8.400l-2.400 7z" fill="#f0f0e4" stroke="#6c7078" stroke-width="0.700"/><path d="M707.600 121v-9.600h3l1 1.200" fill="none" stroke="#8c9098" stroke-width="0.700"/><circle cx="717" cy="113.400" r="1" fill="#3c4c6c"/>
<rect x="707.400" y="127" width="11" height="11" fill="#f4d44c" stroke="#2c3460" stroke-width="1"/><path d="M707.400 132.400h11M713 127v11" stroke="#2c3460" stroke-width="0.700"/><rect x="708.400" y="128" width="4" height="2" fill="#fff8d0"/><rect x="714" y="133.400" width="3.600" height="2" fill="#fff8d0"/>
<circle cx="712.800" cy="148.600" r="5.600" fill="#3c8cd8"/><path d="M712.800 148.600l-5-2.400a5.600 5.600 0 0 1 8.800-2z" fill="#d8382c"/><path d="M712.800 148.600l3.800-4.400a5.600 5.600 0 0 1 1.400 7z" fill="#e8a020"/><path d="M712.800 148.600l5.200 2.600a5.600 5.600 0 0 1-9.600 1z" fill="#34a844"/>
<rect x="707.600" y="159" width="10.600" height="10.800" fill="#f0f4f8" stroke="#24346c" stroke-width="1"/><path d="M707.600 161.600h10.600" stroke="#24346c" stroke-width="1.400"/><rect x="708.800" y="163.400" width="2.400" height="5" fill="#5c9cd0"/><path d="M712.400 164.400h5M712.400 166.800h5" stroke="#7c8498" stroke-width="0.700"/>
<circle cx="711.600" cy="179.600" r="2.200" fill="#5c9cd0" stroke="#3c5c8c" stroke-width="0.600"/><path d="M712.600 180.400h3.600l-0.400 3h-2.800z" fill="#f4f4f4" stroke="#4c5468" stroke-width="0.600"/>
<path d="M685.2 464.3h2.6l-1.3 1.6z" fill="#555"/>
<circle cx="715.600" cy="465" r="2.800" fill="#f4f4f4" stroke="#44485c" stroke-width="0.800"/><path d="M714.400 464.400c0.400-1.400 2.400-1.200 2.200 0c-0.200 0.800-1 0.800-1 1.800" fill="none" stroke="#44485c" stroke-width="0.600"/>
<path d="M611 462v6M633.500 462v6M660 462v6" stroke="#c8c8d0" stroke-width="0.600"/>
<path d="M99.500 454.500v4.500" stroke="#444" stroke-width="0.800"/>
<path d="M14.600 427.600v-15" stroke="#2c8c3c" stroke-width="1.300"/><path d="M13.400 414l1.400-3.600l1.200 3.600z" fill="#2c8c3c"/><path d="M14.600 427.600l11-1.600" stroke="#d8482c" stroke-width="1.300"/><path d="M24.600 424.600l3.400 1.200l-3 1.800z" fill="#d8482c"/><rect x="13" y="426" width="3.200" height="3.200" fill="#2c3cc8"/>
  </svg>
</div>
</body>
</html>
